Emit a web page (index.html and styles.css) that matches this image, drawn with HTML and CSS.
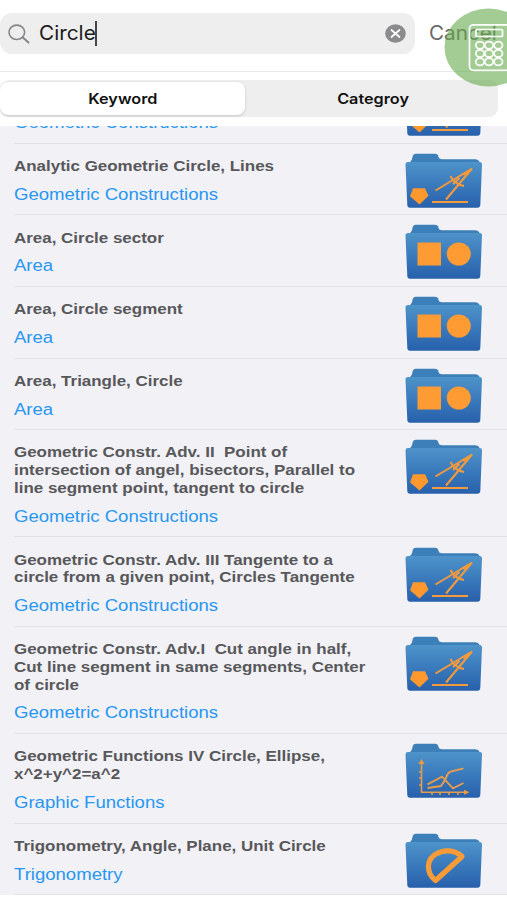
FILE: index.html
```html
<!DOCTYPE html>
<html lang="en">
<head>
<meta charset="utf-8">
<title>Search</title>
<link rel="stylesheet" href="styles.css">
</head>
<body>
<svg class="defs" width="0" height="0" aria-hidden="true">
  <defs>
    <linearGradient id="blue" x1="0" y1="0" x2="0" y2="1"><stop offset="0" stop-color="#4e93c9"/><stop offset=".5" stop-color="#3a7abc"/><stop offset="1" stop-color="#2860ab"/></linearGradient>
    <symbol id="folder" viewBox="0 0 78 56">
      <path d="M3.500 10 Q7 8 7.500 4 Q8 .8 11 .8 H30 Q33 .8 33.500 4 Q34 6.300 37 6.300 H70 Q73 6.500 74 8 L76 12 H3Z" fill="#3d7fb8"/>
      <path d="M3 9 H75 Q77.200 9 77 11.500 L75.300 52 Q75 54.700 72.500 54.700 H5 Q2.500 54.700 2.300 52 L.5 11.500 Q.5 9 3 9Z" fill="url(#blue)"/>
    </symbol>
    <symbol id="compass" viewBox="0 0 78 56">
      <use href="#folder"/>
      <path d="M8 35.200 H20 L23.500 42.800 L14.500 51.500 L5 43.300Z" fill="#ff982d"/>
      <path d="M30.500 37.500 L67 15.500 L41 46.500 M45.500 23 Q49 31 59 33 M48 31 L54.500 25 M27 49 H63" fill="none" stroke="#f39a3d" stroke-width="2"/>
      <path d="M67.500 15 L55 21.500 L62 23Z" fill="#f39a3d"/>
    </symbol>
    <symbol id="shapes" viewBox="0 0 78 56">
      <use href="#folder"/>
      <path d="M12.500 18.500H36V41.500H12.500Z" fill="#ff9b32"/><ellipse cx="53.800" cy="30" rx="12" ry="11.500" fill="#ff9b32"/>
    </symbol>
    <symbol id="graph" viewBox="0 0 78 56">
      <use href="#folder"/>
      <path d="M16.500 19 V49.300 H61 M14 29H17 M14 35H17 M14 42H17 M27 49V52 M35 49V52 M44 49V52 M53 49V52" fill="none" stroke="#e69c4c" stroke-width="1.600"/>
      <path d="M16.500 16L19.500 21H13.500Z M64.500 49.300L59 46.800V51.800Z" fill="#f39a3d"/>
      <path d="M22.500 41.300 L37 33.700 L48 45.300 L58.500 40 M22.500 45 L36 43 Q39 39 41 35 Q43 29 46 28.500 L58.500 25.300" fill="none" stroke="#e69c4c" stroke-width="1.900"/>
    </symbol>
    <symbol id="protractor" viewBox="0 0 78 56">
      <use href="#folder"/>
      <path d="M30.500 47.500 C20 39 22 26 31 21 C39 16 50 17 57 23.500 Z" fill="none" stroke="#f99b36" stroke-width="5.200" stroke-linejoin="round"/>
    </symbol>
  </defs>
</svg>
<div class="screen">
  <header class="header">
    <div class="search-row">
      <div class="search">
        <svg class="glass" viewBox="0 0 22 20"><ellipse cx="8.800" cy="8.300" rx="7.800" ry="7.200" fill="none" stroke="#85858a" stroke-width="1.600"/><path d="M14.500 13.300L20.500 18.500" stroke="#85858a" stroke-width="2" stroke-linecap="round"/></svg>
        <span class="query">Circle</span><i class="caret"></i>
        <svg class="clear" viewBox="0 0 21 19"><ellipse cx="10.500" cy="9.500" rx="10.300" ry="9.300" fill="#8b8b8e"/><path d="M6.500 6L14.500 13M14.500 6L6.500 13" stroke="#fff" stroke-width="1.700" stroke-linecap="round"/></svg>
      </div>
      <span class="cancel">Cancel</span>
    </div>
    <div class="tabs">
      <div class="tab active"><span class="keyword">Keyword</span></div>
      <div class="tab"><span class="category">Categroy</span></div>
    </div>
    <svg class="calculator" viewBox="0 0 63 80">
      <ellipse cx="44.500" cy="39.500" rx="44" ry="39" fill="#64aa4b" fill-opacity=".6"/>
      <g fill="none" stroke="#fff" stroke-width="1.700">
        <rect x="25.500" y="16.800" width="40" height="45.500" rx="4"/>
        <rect x="32" y="21.500" width="26.500" height="7" rx="1"/>
        <ellipse cx="36" cy="37.300" rx="4.200" ry="3.600"/><ellipse cx="45" cy="37.300" rx="4.200" ry="3.600"/><ellipse cx="54.300" cy="37.300" rx="4.200" ry="3.600"/>
        <ellipse cx="36" cy="45.500" rx="4.200" ry="3.600"/><ellipse cx="45" cy="45.500" rx="4.200" ry="3.600"/><ellipse cx="54.300" cy="45.500" rx="4.200" ry="3.600"/>
        <ellipse cx="36" cy="53.700" rx="4.200" ry="3.600"/><ellipse cx="45" cy="53.700" rx="4.200" ry="3.600"/><ellipse cx="54.300" cy="53.700" rx="4.200" ry="3.600"/>
      </g>
    </svg>
  </header>
  <main class="list">
    <div class="row clipped"><div class="text"><div class="title">&nbsp;</div><div class="topic">Geometric Constructions</div></div><svg class="icon"><use href="#compass"/></svg></div>
    <div class="row"><div class="text"><div class="title">Analytic Geometrie Circle, Lines</div><div class="topic">Geometric Constructions</div></div><svg class="icon"><use href="#compass"/></svg></div>
    <div class="row"><div class="text"><div class="title">Area, Circle sector</div><div class="topic">Area</div></div><svg class="icon"><use href="#shapes"/></svg></div>
    <div class="row"><div class="text"><div class="title">Area, Circle segment</div><div class="topic">Area</div></div><svg class="icon"><use href="#shapes"/></svg></div>
    <div class="row"><div class="text"><div class="title">Area, Triangle, Circle</div><div class="topic">Area</div></div><svg class="icon"><use href="#shapes"/></svg></div>
    <div class="row"><div class="text"><div class="title">Geometric Constr. Adv. II&nbsp; Point of<br>intersection of angel, bisectors, Parallel to<br>line segment point, tangent to circle</div><div class="topic">Geometric Constructions</div></div><svg class="icon"><use href="#compass"/></svg></div>
    <div class="row"><div class="text"><div class="title">Geometric Constr. Adv. III Tangente to a<br>circle from a given point, Circles Tangente</div><div class="topic">Geometric Constructions</div></div><svg class="icon"><use href="#compass"/></svg></div>
    <div class="row"><div class="text"><div class="title">Geometric Constr. Adv.I&nbsp; Cut angle in half,<br>Cut line segment in same segments, Center<br>of circle</div><div class="topic">Geometric Constructions</div></div><svg class="icon"><use href="#compass"/></svg></div>
    <div class="row"><div class="text"><div class="title">Geometric Functions IV Circle, Ellipse,<br>x^2+y^2=a^2</div><div class="topic">Graphic Functions</div></div><svg class="icon"><use href="#graph"/></svg></div>
    <div class="row"><div class="text"><div class="title">Trigonometry, Angle, Plane, Unit Circle</div><div class="topic">Trigonometry</div></div><svg class="icon"><use href="#protractor"/></svg></div>
  </main>
</div>
</body>
</html>
```

FILE: styles.css
```css
* { box-sizing: border-box; }
body { margin: 0; background: #fff; font-family: "Liberation Sans", Arial, sans-serif; }
.defs { position: absolute; }
.screen { width: 507px; height: 900px; overflow: hidden; }

.header { position: relative; height: 126px; background: #fff; font-family: Inter, sans-serif; }
.search-row { height: 72px; padding-top: 13px; display: flex; align-items: flex-start; border-bottom: 1px solid #e9e9ea; }
.search { width: 415px; height: 41px; padding: 0 9px 0 8px; display: flex; align-items: center; background: #eeeeef; border-radius: 12px; }
.glass { width: 22px; height: 20px; }
.query { width: 56px; margin-left: 9px; font-size: 20px; line-height: 41px; color: #1c1c1e; white-space: nowrap; transform: scaleX(1.04); transform-origin: left; }
.caret { width: 2px; height: 25px; background: #444; }
.clear { width: 21px; height: 19px; margin-left: auto; }
.cancel { margin-left: 14px; font-size: 19.500px; line-height: 41px; color: #69696b; transform: scaleX(1.06); transform-origin: left; }
.tabs { height: 37px; width: 498px; margin-top: 8px; padding: 2px 0; display: flex; background: #eeeeef; border-radius: 9px; }
.tab { flex: 1; display: flex; align-items: center; justify-content: center; font-size: 14.500px; font-weight: 600; color: #111; }
.tab.active { flex: 0 0 245px; background: #fff; border-radius: 8px; box-shadow: 0 1px 3px rgba(0, 0, 0, .18); }
.keyword, .category { transform: scaleX(1.12); }
.category { margin-left: 4px; }
.calculator { position: absolute; left: 444px; top: 8px; width: 63px; height: 80px; }

.list { height: 769px; overflow: hidden; background: #f1f1f6; }
.row { position: relative; display: flex; justify-content: space-between; padding: 14.200px 24.500px 10.650px 14px; }
.row::after { content: ""; position: absolute; left: 14px; right: 0; bottom: 0; height: 1px; background: #e1e1e6; }
.clipped { margin-top: -53.900px; }
.text { width: 360px; }
.title { font-size: 14.500px; font-weight: 700; line-height: 17.800px; color: #58585a; white-space: nowrap; transform: scaleX(1.169); transform-origin: left; }
.topic { margin-top: 9px; font-size: 16px; line-height: 20px; color: #2797f2; white-space: nowrap; transform: scaleX(1.159); transform-origin: left; }
.icon { width: 78px; height: 56px; margin: -5.100px 0 -20px; }
```
